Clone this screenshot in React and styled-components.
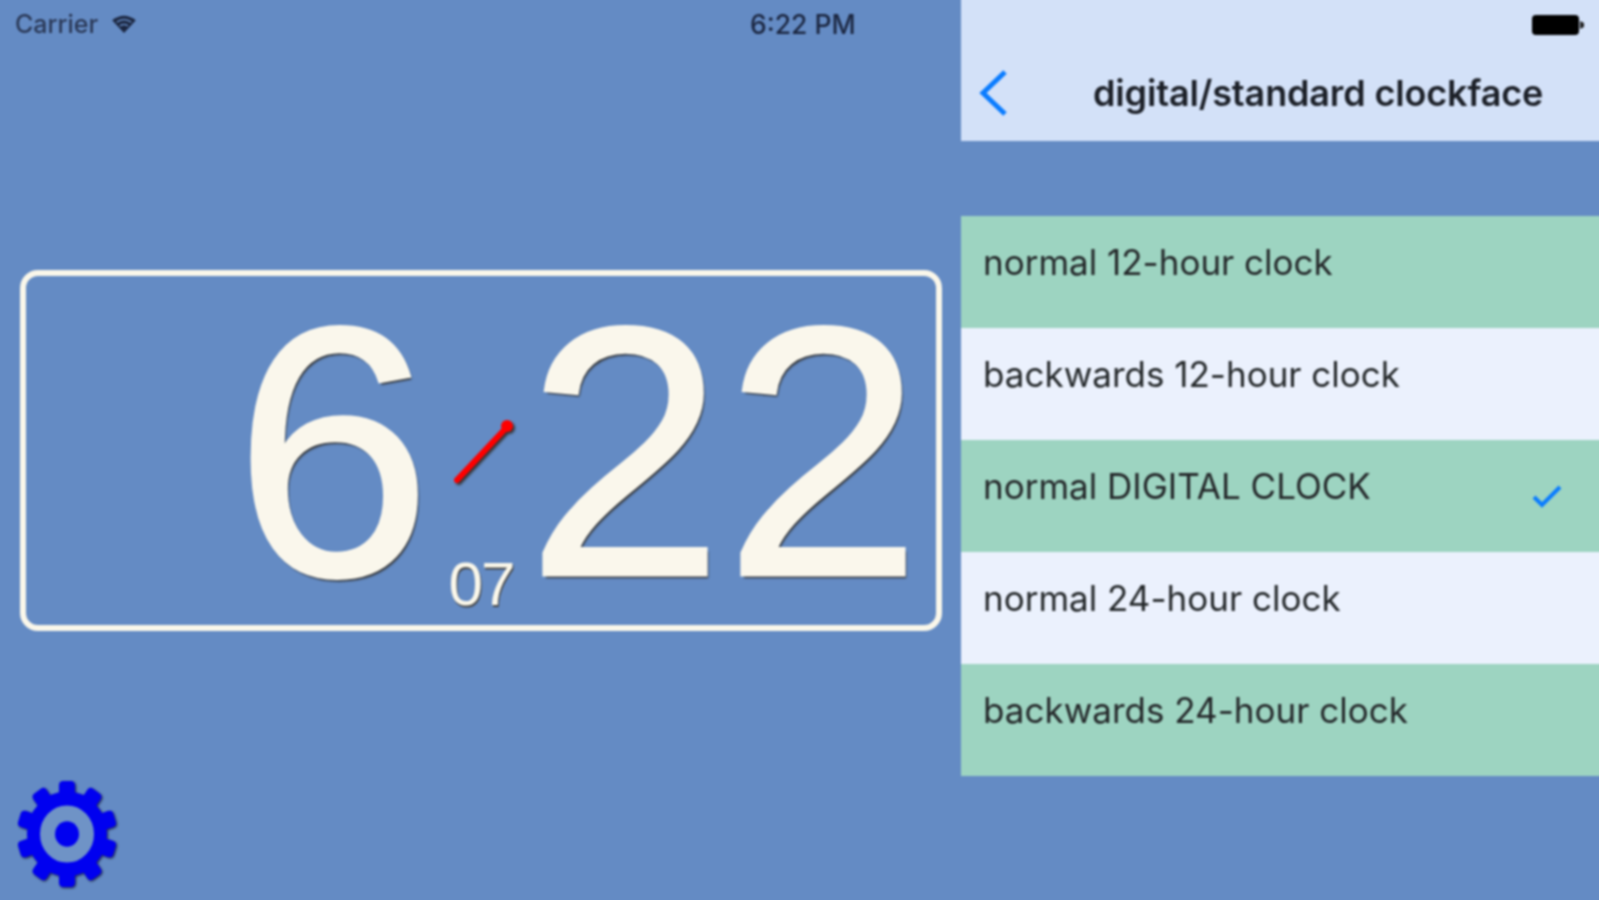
import React from "react";
import styled, { createGlobalStyle } from "styled-components";

const Global = createGlobalStyle`
  html, body { margin: 0; padding: 0; background: #648bc4; }
  body { font-family: "Liberation Sans", Arial, sans-serif; overflow: hidden; }
`;
const Viewport = styled.div`
  width: 1599px; height: 900px; overflow: hidden;
`;
const Screen = styled.div`
  width: 1607px; height: 908px; margin: -4px; display: flex; background: #648bc4; filter: blur(0.8px);
`;
const Left = styled.div`
  width: 961px; height: 904px; padding: 4px 0 0 4px; display: flex; flex-direction: column; flex: none;
`;
const StatusBar = styled.div`
  height: 50px; display: flex; align-items: center; padding: 0 0 2px 15px; box-sizing: border-box;
  font-family: "Inter", sans-serif;
`;
const Carrier = styled.span`
  font-size: 25px; font-weight: 500; color: #2a3856; display: flex; align-items: center; gap: 12px; width: 127px;
`;
const Time = styled.span`
  font-size: 26.5px; font-weight: 500; color: #1b2640; margin-left: 608px;
`;
const ClockBox = styled.div`
  margin: 220px 19px 0 20px; height: 361px; box-sizing: border-box;
  border: 6px solid #faf7ea; border-radius: 18px; display: flex; justify-content: flex-end; align-items: flex-start;
  padding: 0 14px 0 0;
`;
const Digits = styled.span`
  font-family: "Liberation Sans", Arial, sans-serif; font-size: 356px; line-height: 352px; height: 349px; color: #faf7ec;
  -webkit-text-stroke: 3px #faf7ec;
  text-shadow: 2px 3px 2px #333; display: block;
`;
const Mid = styled.div`
  width: 94px; height: 349px; display: flex; flex-direction: column; align-items: center; flex: none;
  padding-top: 137px; box-sizing: border-box;
`;
const Hand = styled.svg`
  margin-left: 10px; flex: none; filter: drop-shadow(2px 2px 1px #333);
`;
const Seconds = styled.span`
  font-family: "Liberation Sans", Arial, sans-serif; font-size: 62px; line-height: 62px; margin: 64px 0 0 4px; color: #faf7ea;
  text-shadow: 1px 2px 1px #444; letter-spacing: -2px;
`;
const GearWrap = styled.div`
  margin: 150px 0 0 17px; width: 100px; height: 106px;
`;
const GearIcon = styled.svg`
  overflow: visible; filter: drop-shadow(1.5px 1.5px 1px #1a2040);
`;
const Right = styled.div`
  flex: 1; display: flex; flex-direction: column;
`;
const Nav = styled.div`
  height: 145px; padding-top: 4px; box-sizing: border-box; background: #d3e1f8; flex: none; display: flex; flex-direction: column;
`;
const BatteryRow = styled.div`
  height: 50px; display: flex; justify-content: flex-end; align-items: center; padding: 0 18px 0 0;
`;
const Title = styled.div`
  display: flex; align-items: center; height: 88px; margin-top: -1px; padding-left: 18px;
  font-family: "Inter", sans-serif; font-weight: 600; font-size: 36px; color: #1c2028;
`;
const TitleText = styled.span` margin-left: 84px; letter-spacing: -0.15px; white-space: nowrap; `;
const List = styled.div`
  margin-top: 75px; display: flex; flex-direction: column;
`;
const Row = styled.div`
  height: 112px; box-sizing: border-box; padding: 0 41px 20px 22px; display: flex; align-items: center; justify-content: space-between;
  background: ${p => (p.$green ? "#9dd4c1" : "#ebf1fd")};
  font-family: "Inter", sans-serif; font-size: 35px; color: #24282a; white-space: nowrap;
`;
const Check = styled.svg`
  margin-top: 20px;
`;

function Gear() {
  const teeth = Array.from({ length: 10 }, (_, i) => i * 36);
  return (
    <GearIcon width="100" height="106" viewBox="-50 -50 100 100" preserveAspectRatio="none">
      {teeth.map(a => (
        <rect key={a} x="-8" y="-50" width="16" height="18" rx="4" fill="#0000f0" transform={`rotate(${a})`} />
      ))}
      <circle r="33.500" fill="#6f93c6" stroke="#0000f0" strokeWidth="13" />
      <circle r="12" fill="#0000f0" />
    </GearIcon>
  );
}

const rows = [
  ["normal 12-hour clock", true],
  ["backwards 12-hour clock", false],
  ["normal DIGITAL CLOCK", true, true],
  ["normal 24-hour clock", false],
  ["backwards 24-hour clock", true],
];

export default function App() {
  return (
    <Viewport>
      <Global />
      <Screen>
        <Left>
          <StatusBar>
            <Carrier>
              Carrier
              <svg width="28" height="20" viewBox="0 0 28 22">
                <path d="M1 7 Q14 -3 27 7 L14 21 Z" fill="#1b2640" />
                <path d="M6 9 Q14 3 22 9 M9.5 13 Q14 10 18.500 13" stroke="#648bc4" strokeWidth="1.6" fill="none" />
              </svg>
            </Carrier>
            <Time>6:22 PM</Time>
          </StatusBar>
          <ClockBox>
            <Digits>6</Digits>
            <Mid>
              <Hand width="68" height="76" viewBox="0 0 68 76">
                <path d="M7 67 L56 15" stroke="#f00" strokeWidth="6" strokeLinecap="round" />
                <circle cx="57" cy="13" r="6" fill="#f00" />
              </Hand>
              <Seconds>07</Seconds>
            </Mid>
            <Digits>22</Digits>
          </ClockBox>
          <GearWrap><Gear /></GearWrap>
        </Left>
        <Right>
          <Nav>
            <BatteryRow>
              <svg width="54" height="26" viewBox="0 0 54 26">
                <rect x="1" y="3" width="47" height="20" rx="4" fill="#000" />
                <path d="M49 9 L53 11 V15 L49 17 Z" fill="#222" />
              </svg>
            </BatteryRow>
            <Title>
              <svg width="30" height="46" viewBox="0 0 30 46">
                <path d="M26 2 L4 23 L26 44" fill="none" stroke="#0a7cff" strokeWidth="5" />
              </svg>
              <TitleText>digital/standard clockface</TitleText>
            </Title>
          </Nav>
          <List>
            {rows.map(([t, g, c]) => (
              <Row key={t} $green={g}>
                <span>{t}</span>
                {c && (
                  <Check width="30" height="24" viewBox="0 0 30 24">
                    <path d="M2 13 L10 21 L28 3" fill="none" stroke="#0a7cff" strokeWidth="4" />
                  </Check>
                )}
              </Row>
            ))}
          </List>
        </Right>
      </Screen>
    </Viewport>
  );
}
